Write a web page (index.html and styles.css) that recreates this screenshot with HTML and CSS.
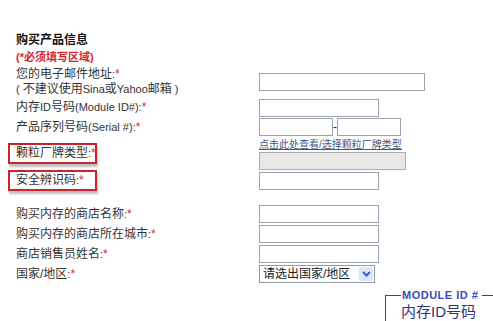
FILE: index.html
```html
<!DOCTYPE html>
<html lang="zh-CN">
<head>
  <meta charset="UTF-8">
  <meta name="viewport" content="width=device-width, initial-scale=1.0">
  <title>购买产品信息</title>
  <link rel="stylesheet" href="styles.css">
</head>
<body>
  <div class="page">
    <h2 class="title">购买产品信息</h2>
    <p class="required">(*必须填写区域)</p>

    <form class="form">
      <div class="row row-email">
        <label class="label" for="email">您的电子邮件地址<span class="en">:</span><span class="star">*</span><br><span class="en">( </span>不建议使用<span class="en">Sina</span>或<span class="en">Yahoo</span>邮箱<span class="en"> )</span></label>
        <input type="text" id="email" class="field field-wide">
      </div>
      <div class="row row-module">
        <label class="label" for="moduleId">内存<span class="en">ID</span>号码<span class="en">(Module ID#):</span><span class="star">*</span></label>
        <input type="text" id="moduleId" class="field">
      </div>
      <div class="row row-serial">
        <label class="label" for="serial1">产品序列号码<span class="en">(Serial #):</span><span class="star">*</span></label>
        <div class="serial">
          <input type="text" id="serial1" class="field field-serial1">
          <span class="dash">-</span>
          <input type="text" class="field field-serial2">
        </div>
      </div>
      <div class="row row-brand">
        <label class="label label-boxed" for="brand">颗粒厂牌类型<span class="en">:</span><span class="star">*</span></label>
        <div class="brand">
          <a class="brand-link" href="#">点击此处查看/选择颗粒厂牌类型</a>
          <input type="text" id="brand" class="field field-gray" readonly>
        </div>
      </div>
      <div class="row row-security">
        <label class="label label-boxed" for="security">安全辨识码<span class="en">:</span><span class="star">*</span></label>
        <input type="text" id="security" class="field">
      </div>

      <div class="row row-store">
        <label class="label" for="store">购买内存的商店名称<span class="en">:</span><span class="star">*</span></label>
        <input type="text" id="store" class="field">
      </div>
      <div class="row">
        <label class="label" for="city">购买内存的商店所在城市<span class="en">:</span><span class="star">*</span></label>
        <input type="text" id="city" class="field">
      </div>
      <div class="row">
        <label class="label" for="seller">商店销售员姓名<span class="en">:</span><span class="star">*</span></label>
        <input type="text" id="seller" class="field">
      </div>
      <div class="row">
        <label class="label" for="country">国家/地区<span class="en">:</span><span class="star">*</span></label>
        <div class="select-wrap">
          <select id="country" class="select">
            <option>请选出国家/地区</option>
          </select>
          <span class="select-arrow">
            <svg width="9" height="6" viewBox="0 0 9 6"><path d="M1 1 L4.5 4.5 L8 1" fill="none" stroke="#2f62c4" stroke-width="2"/></svg>
          </span>
        </div>
      </div>
    </form>

    <!-- module id callout from the label photo -->
    <div class="callout">
      <span class="callout-corner"></span>
      <span class="callout-title">MODULE ID #</span>
      <span class="callout-line"></span>
      <span class="callout-stem"></span>
      <span class="callout-body">内存ID号码</span>
    </div>
  </div>
</body>
</html>
```

FILE: styles.css
```css
body {
  margin: 0;
  background: #fff;
  color: #333;
  font-family: "Liberation Sans", "Noto Sans CJK SC", sans-serif;
  font-size: 12px;
  overflow: hidden;
}

.page {
  height: 321px;
  padding: 31px 0 0 16px;
  box-sizing: border-box;
  overflow: hidden;
}

.title {
  margin: 0;
  height: 18px;
  line-height: 18px;
  font-size: 12px;
  font-weight: bold;
  color: #111;
}

.required {
  margin: 0;
  height: 17px;
  line-height: 17px;
  font-size: 11px;
  font-weight: bold;
  color: #d8262c;
}

.form {
  margin: 0;
}

.row {
  display: flex;
  align-items: center;
  height: 20px;
}

.label {
  width: 243px;
  flex: none;
  line-height: 15px;
  white-space: nowrap;
}

.en {
  font-size: 11px;
}

.star {
  color: #e0282e;
}

.row-email {
  height: 32px;
}

.row-module {
  height: 19px;
}

.row-brand {
  height: 33px;
}

.row-security {
  height: 21px;
}

.row-store {
  margin-top: 13px;
}

/* red highlight boxes around two labels */
.label-boxed {
  box-sizing: border-box;
  width: 89px;
  height: 21px;
  margin: 0 162px 0 -8px;
  padding-left: 6px;
  line-height: 17px;
  border: 2px solid #c9252c;
  box-shadow: 1px 3px 2px rgba(0, 0, 0, 0.25);
}

.field {
  box-sizing: border-box;
  width: 120px;
  height: 18px;
  margin: 0;
  padding: 0 2px;
  border: 1px solid #9aa3ad;
  background: #fff;
  font: inherit;
}

.field-wide {
  width: 166px;
}

.serial {
  display: flex;
  align-items: center;
}

.field-serial1 {
  width: 74px;
}

.dash {
  width: 4px;
  line-height: 12px;
}

.field-serial2 {
  width: 64px;
}

.brand {
  display: flex;
  flex-direction: column;
}

.brand-link {
  height: 14px;
  line-height: 13px;
  font-size: 10px;
  color: #3e5682;
  text-decoration: underline;
}

.field-gray {
  width: 147px;
  background: #e9e8e6;
  border-color: #a9adb2;
}

.select-wrap {
  position: relative;
  width: 116px;
  height: 18px;
}

.select {
  appearance: none;
  box-sizing: border-box;
  width: 100%;
  height: 100%;
  margin: 0;
  padding: 0 0 0 3px;
  border: 1px solid #8f99a6;
  background: #fff;
  font: inherit;
  font-size: 12px;
  color: #222;
}

.select-arrow {
  position: absolute;
  top: 2px;
  right: 2px;
  width: 14px;
  height: 14px;
  display: flex;
  align-items: center;
  justify-content: center;
  background: #dbe6f7;
  border-radius: 2px;
  pointer-events: none;
}

.callout {
  display: grid;
  grid-template-columns: 16px auto 1fr;
  grid-template-rows: 13px 20px;
  margin: 5px 0 0 369px;
}

.callout-corner {
  margin-top: 6px;
  border-top: 1px solid #3a3f86;
  border-left: 1px solid #3a3f86;
}

.callout-stem {
  border-left: 1px solid #3a3f86;
}

.callout-title {
  padding-left: 1px;
  line-height: 13px;
  font-size: 11px;
  font-weight: bold;
  letter-spacing: 0.5px;
  color: #3a4bbd;
  white-space: nowrap;
}

.callout-line {
  height: 1px;
  margin: 6px 0 0 4px;
  background: #3a3f86;
}

.callout-body {
  grid-column: 2 / 4;
  padding-top: 1px;
  line-height: 18px;
  font-size: 15px;
  color: #2f3378;
  white-space: nowrap;
}
```
